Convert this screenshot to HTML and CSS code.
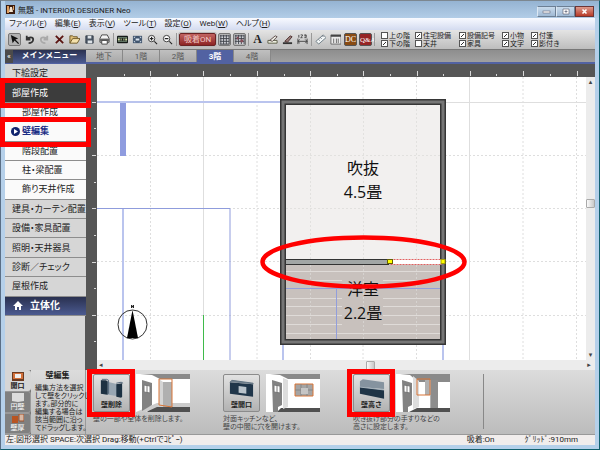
FILE: index.html
```html
<!DOCTYPE html>
<html lang="ja">
<head>
<meta charset="utf-8">
<title>無題 - INTERIOR DESIGNER Neo</title>
<link rel="stylesheet" href="styles.css">
</head>
<body>
<div class="window">
  <header class="titlebar">
    <svg class="app-icon" viewBox="0 0 9 9"><rect width="9" height="9" fill="#3b1d10"/><path d="M1 1h2v7H1zM7 1h1v4H7z" fill="#e0a060"/><path d="M4 2h2l1 5H3z" fill="#f3e3cf"/></svg>
    <h1>無題 - INTERIOR DESIGNER Neo</h1>
    <div class="window-buttons">
      <button type="button" aria-label="最小化"><svg viewBox="0 0 17 9"><rect x="5" y="4" width="7" height="2" fill="#fff" stroke="#667" stroke-width=".6"/></svg></button>
      <button type="button" aria-label="最大化"><svg viewBox="0 0 17 9"><path d="M6 2h6v5H6zM8 4h2v1H8z" fill="#fff" fill-rule="evenodd" stroke="#556" stroke-width=".6"/></svg></button>
      <button type="button" class="close" aria-label="閉じる"><svg viewBox="0 0 17 9"><path d="M6.500 2.500l4 4m0-4l-4 4" stroke="#fff" stroke-width="1.600"/></svg></button>
    </div>
  </header>
  <nav class="menubar">
    <button type="button">ファイル(<u>F</u>)</button>
    <button type="button">編集(<u>E</u>)</button>
    <button type="button">表示(<u>V</u>)</button>
    <button type="button">ツール(<u>T</u>)</button>
    <button type="button">設定(<u>O</u>)</button>
    <button type="button">Web(<u>W</u>)</button>
    <button type="button">ヘルプ(<u>H</u>)</button>
  </nav>
  <div class="toolbar">
    <div class="tools">
      <button type="button" class="pressed" aria-label="選択"><svg viewBox="0 0 12 12"><path d="M2 1l8 4-3 1 4 4-1 1-4-4-2 3z" fill="#111"/></svg></button>
      <button type="button" aria-label="元に戻す"><svg viewBox="0 0 12 12"><path d="M3 2v4h4M3 6c2-3 7-3 7 0 0 2-2 4-5 4" fill="none" stroke="#333" stroke-width="2"/></svg></button>
      <button type="button" aria-label="やり直し"><svg viewBox="0 0 12 12"><path d="M9 2v4H5M9 6C7 3 2 3 2 6c0 2 2 4 5 4" fill="none" stroke="#a9a9a9" stroke-width="2"/></svg></button>
      <button type="button" aria-label="削除"><svg viewBox="0 0 12 12"><path d="M2 2l8 8M10 2l-8 8" stroke="#5b1512" stroke-width="2"/></svg></button>
      <button type="button" aria-label="開く"><svg viewBox="0 0 12 12"><path d="M1 10V2h3l1 1h4v2" fill="#e0c078" stroke="#6b5524"/><path d="M1 10l3-5h8l-3 5z" fill="#f5e2ac" stroke="#6b5524"/></svg></button>
      <button type="button" aria-label="保存"><svg viewBox="0 0 12 12"><path d="M2 2h8v8H2z" fill="#4a5563" stroke="#39424d"/><path d="M4 2h4v3H4zM4 7h5v3H4z" fill="#dde3e8"/></svg></button>
      <button type="button" aria-label="印刷"><svg viewBox="0 0 12 12"><path d="M3 1h6l2 4v4H1V5z" fill="#f4f4f4" stroke="#444"/><path d="M1 5h10v3H1z" fill="#666"/><path d="M3 7h6v4H3z" fill="#fff" stroke="#444"/></svg></button>
      <i class="sep"></i>
      <button type="button" aria-label="部品検索"><svg viewBox="0 0 12 12"><rect x="0" y="2" width="12" height="8" rx="1" fill="#151a18"/><path d="M1 4h10M1 8h10" stroke="#78907c"/><path d="M1 6h2m1 0h1m2 0h1m1 0h2" stroke="#d5e5a8" stroke-width="2"/></svg></button>
      <button type="button" aria-label="全体表示"><svg viewBox="0 0 12 12"><rect x="1" y="2" width="10" height="8" fill="#41556e"/><path d="M2 3h2L2 5zM10 3H8l2 2zM2 9h2L2 7zM10 9H8l2-2zM4 5h4v2H4z" fill="#dbe6f2"/></svg></button>
      <button type="button" aria-label="拡大"><svg viewBox="0 0 12 12"><circle cx="5" cy="5" r="3.500" fill="#fff" stroke="#333"/><path d="M3 5h4M5 3v4M8 8l3 3" stroke="#222" stroke-width="1.200"/></svg></button>
      <button type="button" aria-label="縮小"><svg viewBox="0 0 12 12"><circle cx="5" cy="5" r="3.500" fill="#fff" stroke="#333"/><path d="M3 5h4M8 8l3 3" stroke="#222" stroke-width="1.200"/></svg></button>
      <i class="sep"></i>
      <button type="button" class="snap">吸着ON</button>
      <button type="button" class="pressed" aria-label="グリッド"><svg viewBox="0 0 12 12"><path d="M1 1h10v10H1z" fill="#d3d5da"/><path d="M1 2h10M1 5h10M1 8h10M1 11h10M2 1v10M5 1v10M8 1v10M11 1v10" stroke="#3d4148"/></svg></button>
      <button type="button" class="pressed" aria-label="グリッド吸着"><svg viewBox="0 0 12 12"><path d="M1 1h10v10H1z" fill="#d3d5da"/><path d="M1 2h10M1 5h10M1 8h10M2 1v10M5 1v10M8 1v10M11 1v10" stroke="#3d4148"/><path d="M3 3h2v3H3zM7 6h3v3H7z" fill="#874d58"/></svg></button>
      <i class="sep"></i>
      <button type="button" class="letter" aria-label="文字">A</button>
      <button type="button" aria-label="塗り"><svg viewBox="0 0 12 12"><path d="M1 7h10v3H1z" fill="#eef0e2" stroke="#5a5a44"/><path d="M3 7l6-5 2 1-5 5z" fill="#f3f3ea" stroke="#544"/></svg></button>
      <button type="button" aria-label="線"><svg viewBox="0 0 12 12"><path d="M1 10h10" stroke="#333" stroke-width="2"/><path d="M3 8l6-6 2 1-5 6z" fill="#9a7d7a" stroke="#4d3030"/></svg></button>
      <button type="button" aria-label="寸法"><svg viewBox="0 0 12 12"><path d="M1 5v6M11 5v6M1 8h10M3 6L1 8l2 2M9 6l2 2-2 2" fill="none" stroke="#444"/><path d="M2 1v3M4 1h2v1L4 4h2M8 1h2v3H8m0-2h2" fill="none" stroke="#444"/></svg></button>
      <i class="sep"></i>
      <button type="button" aria-label="測定"><svg viewBox="0 0 12 12"><path d="M1 8l8-7 3 3-8 7z" fill="#f2f6f7" stroke="#6b7b83"/><path d="M4 6l1 1m1-3l1 1m1-3l1 1" stroke="#445"/></svg></button>
      <button type="button" aria-label="一覧"><svg viewBox="0 0 12 12"><path d="M1 1h11v10H1z" fill="#ececec" stroke="#666"/><path d="M1 2h11" stroke="#444" stroke-width="2"/><path d="M4 5v5M7 5v5M9 5v5" stroke="#666"/></svg></button>
      <button type="button" class="badge dc">DC</button>
      <button type="button" class="badge qa">Q&amp;A</button>
      <i class="sep"></i>
    </div>
    <fieldset class="layers" aria-label="表示レイヤー">
      <label><input type="checkbox">上の階</label>
      <label><input type="checkbox" checked>住宅設備</label>
      <label><input type="checkbox" checked>設備記号</label>
      <label><input type="checkbox" checked>小物</label>
      <label><input type="checkbox" checked>付箋</label>
      <label><input type="checkbox" checked>下の階</label>
      <label><input type="checkbox">天井</label>
      <label><input type="checkbox" checked>家具</label>
      <label><input type="checkbox" checked>文字</label>
      <label><input type="checkbox" checked>影付き</label>
    </fieldset>
  </div>
  <div class="tabbar">
    <button type="button" class="collapse" aria-label="メニューを閉じる">«</button>
    <h2>メインメニュー</h2>
    <div class="floors">
      <button type="button">地下</button>
      <button type="button">1階</button>
      <button type="button">2階</button>
      <button type="button" class="current">3階</button>
      <button type="button">4階</button>
    </div>
  </div>
  <div class="middle">
    <nav class="sidebar">
      <ul>
        <li><a href="#">下絵設定</a></li>
        <li class="open marked"><a href="#">部屋作成</a></li>
        <li class="sub"><a href="#">部屋作成</a></li>
        <li class="sub active marked"><a href="#"><svg viewBox="0 0 9 9"><circle cx="4.500" cy="4.500" r="4.500" fill="#10246e"/><path d="M3 2l4 2.500L3 7z" fill="#fff"/></svg>壁編集</a></li>
        <li class="sub"><a href="#">階段配置</a></li>
        <li class="sub"><a href="#">柱・梁配置</a></li>
        <li class="sub"><a href="#">飾り天井作成</a></li>
        <li><a href="#">建具・カーテン配置</a></li>
        <li><a href="#">設備・家具配置</a></li>
        <li><a href="#">照明・天井器具</a></li>
        <li><a href="#">診断／チェック</a></li>
        <li><a href="#">屋根作成</a></li>
        <li class="solid"><a href="#"><svg viewBox="0 0 10 9"><path d="M0 5l5-5 5 5H8v4H6V6H4v3H2V5z" fill="#fff"/></svg>立体化</a></li>
      </ul>
    </nav>
    <div class="workspace">
      <svg class="ruler-top"><path d="M53 7v5M106 7v5M160 7v5M213 7v5M266 7v5M320 7v5M373 7v5M426 7v5M480 7v5" transform="translate(12.500 0)"/><path d="M27 10v2M80 10v2M133 10v2M187 10v2M240 10v2M293 10v2M346 10v2M399 10v2M453 10v2" transform="translate(12.500 0)"/></svg>
      <svg class="ruler-left"><path d="M7 25.500h4M7 78.500h4M7 131.500h4M7 185.500h4M7 238.500h4"/><path d="M9 51.500h2M9 105.500h2M9 158.500h2M9 211.500h2M9 264.500h2"/></svg>
      <svg class="plan" role="img" aria-label="3階平面図">
        <g transform="translate(-97 -77)">
          <g class="grid">
            <path d="M97 102.500h489M203.500 77v283M469.500 77v283"/>
            <path class="dots" d="M97 155.500h489M97 208.500h489M97 261.500h489M97 315.500h489M150.500 77v283M257 77v283M310.500 77v283M363 77v283M416.500 77v283M523 77v283M576.500 77v283"/>
          </g>
          <rect x="120" y="102" width="6" height="54" fill="#8f9cdf"/>
          <path d="M97 102h184M123 209v151M283 345v15M443 345v15" stroke="#bac4ee" stroke-width="2"/>
          <path d="M97 208.500h133v152" fill="none" stroke="#8f9cdc"/>
          <path d="M203.500 315v45" stroke="#3fba4a"/>
          <circle cx="132.500" cy="324.500" r="14.500" fill="none" stroke="#333"/>
          <path d="M132.500 310l5.500 28h-11z"/>
          <path d="M131.500 308v-3l2 3v-3" fill="none" stroke="#222"/>
          <rect x="283" y="102" width="160" height="240" fill="#f2f0ef"/>
          <path class="inner-grid" d="M310.500 105v155M363.500 105v155M416.500 105v155M286 155.500h154M286 208.500h154"/>
          <rect x="286" y="264" width="154" height="75" fill="#c8c1bd"/>
          <path class="boards" d="M286 271.500h154M286 280.500h56M383 280.500h57M286 298.500h56M383 298.500h57M286 306.500h56M383 306.500h57M286 315.500h56M383 315.500h57M286 324.500h56M383 324.500h57M286 333.500h154"/>
          <path class="inner-grid" d="M310.500 265v74M363.500 265v74M416.500 265v74"/>
          <path d="M286 288.500h154M336.500 288v51" stroke="#929edb" fill="none"/>
          <rect x="283" y="102" width="160" height="240" fill="none" stroke="#363636" stroke-width="6"/>
          <rect x="283" y="102" width="160" height="240" fill="none" stroke="#767676" stroke-width="3"/>
          <rect x="285.500" y="259.500" width="103" height="5" fill="#a2a6a5" stroke="#333"/>
          <rect x="390.500" y="259.500" width="51" height="5" fill="#fff" stroke="#e06060" stroke-dasharray="2 1"/>
          <rect x="387.500" y="259.500" width="5" height="4" fill="#ff0" stroke="#666000"/>
          <rect x="441" y="259.500" width="4" height="4" fill="#ff0" stroke="#a8a000"/>
          <g class="room">
            <text x="363" y="174">吹抜</text>
            <text x="363" y="198">4.5畳</text>
            <text x="363" y="295">洋室</text>
            <text x="363" y="319">2.2畳</text>
          </g>
          <ellipse cx="363.500" cy="262" rx="101" ry="24.500" fill="none" stroke="#f00" stroke-width="4.500"/>
        </g>
      </svg>
      <div class="scroll vertical"><i class="arrow">▴</i><i class="thumb"></i><i class="arrow">▾</i></div>
      <div class="scroll horizontal"><i class="arrow">◂</i><i class="thumb"></i><i class="arrow">▸</i></div>
    </div>
  </div>
  <section class="panel">
    <div class="modes">
      <button type="button" class="current"><svg viewBox="0 0 12 9"><path d="M0 0h12v9H0z" fill="#6b3a20"/><path d="M1 1h10v6H1z" fill="#d2703a"/><path d="M3 2h6v4H3z" fill="#eee"/></svg>開口</button>
      <button type="button"><svg viewBox="0 0 12 9"><path d="M0 0h12v8l-6 1-6-1z" fill="#dcdcdc"/></svg>円壁</button>
      <button type="button"><svg viewBox="0 0 12 9"><path d="M0 2h6v7H0z" fill="#b85422"/><path d="M7 0h5v7H7z" fill="#d8b8a4" stroke="#a0502a"/></svg>壁厚</button>
    </div>
    <div class="help">
      <h3>壁編集</h3>
      <p>編集方法を選択<br>して壁をクリックし<br>ます。部分的に<br>編集する場合は<br>該当範囲に沿っ<br>てドラッグします。</p>
    </div>
    <div class="actions">
      <article class="action marked">
        <button type="button"><svg viewBox="0 0 28 22"><path d="M3 2l22 5v12L3 16z" fill="#98a6b2"/><path d="M3 2h5l2 1v14l-7-1zM19 6l6-1v14l-1 1-5-1z" fill="#1d3142"/><path d="M4 1h5l2 1v14M19 5l5-1 2 1" fill="none" stroke="#52667a"/></svg>壁削除</button>
        <svg class="scene" viewBox="0 0 54 38"><rect width="54" height="38" fill="#fff"/><path d="M4 0h50v5H24l-8-4z" fill="#8a8a8a"/><path d="M15 33h39v5H11z" fill="#505050"/><path d="M0 38l21-9h33v4H21L10 38z" fill="#ccc"/><path d="M6 6l10 3v22L6 37z" fill="#828282"/><path d="M8 11l6 1v7l-6-1zM11 11v8" fill="#fff" stroke="#777"/><path d="M23 5l4 3v25l-4-1z" fill="#d5d5d5"/><path d="M27 8h9v25h-9z" fill="#b0b0b0"/><path d="M23 5h13v28l-13-2z" fill="none" stroke="#d87536"/></svg>
        <p>壁の一部や全体を削除します。</p>
      </article>
      <article class="action">
        <button type="button"><svg viewBox="0 0 28 22"><path d="M2 4l24 2v13L2 16z" fill="#20364a"/><path d="M2 4l2-2 22 3v1" fill="#73818e" stroke="#5e707f"/><path d="M11 8l8 1v7l-8-1z" fill="#b9c3cb"/></svg>壁開口</button>
        <svg class="scene" viewBox="0 0 54 38"><rect width="54" height="38" fill="#fff"/><path d="M4 0h50v5H22l-8-4z" fill="#8a8a8a"/><path d="M15 34h39v4H11z" fill="#505050"/><path d="M17 4l5 2v27l-5 2z" fill="#ddd"/><path d="M6 6l10 3v22l-4 2v5H7z" fill="#828282"/><path d="M8 11l6 1v7l-6-1zM11 11v8" fill="#fff" stroke="#777"/><path d="M29 10h18v12H29z" fill="#a4a4a4" stroke="#d87536"/><path d="M35 10v12M41 10v12M29 16h18" stroke="#868686"/><path d="M35 14h7v6h-7z" fill="#c5c5c5"/></svg>
        <p>対面キッチンなど、<br>壁の中間に穴を開けます。</p>
      </article>
      <article class="action marked">
        <button type="button"><svg viewBox="0 0 28 22"><path d="M2 3l3-2 22 3v7L2 9z" fill="#85939f"/><path d="M2 9l25 3v9L2 16z" fill="#1f3446"/><path d="M2 9l25 3" stroke="#a7b4bd"/></svg>壁高さ</button>
        <svg class="scene" viewBox="0 0 54 38"><rect width="54" height="38" fill="#fff"/><path d="M4 0h50v8H22l-8-7z" fill="#8a8a8a"/><path d="M21 34h33v4H13z" fill="#505050"/><path d="M17 2l6 5v26l-6 2z" fill="#ddd"/><path d="M6 6l10 3v22l-4 2v5H7z" fill="#828282"/><path d="M8 11l6 1v7l-6-1zM11 11v8" fill="#fff" stroke="#777"/><path d="M29 6h7v28h-2V21h-5z" fill="#b0b0b0"/><path d="M35 6h7v28h-7z" fill="#8d8d8d"/><path d="M21 5h13v16H21z" fill="none" stroke="#d87536"/></svg>
        <p>吹き抜け部分の手すりなどの<br>高さに設定します。</p>
      </article>
    </div>
  </section>
  <footer class="status">
    <span class="hint">左:図形選択 SPACE:次選択 Drag:移動(+Ctrlでｺﾋﾟｰ)</span>
    <span class="snap-state">吸着:On</span>
    <span class="grid-size">ｸﾞﾘｯﾄﾞ:910mm</span>
  </footer>
</div>
</body>
</html>
```
FILE: styles.css
```css
*, *::before, *::after { box-sizing: border-box; }
html, body { height: 100%; }
body {
  margin: 0;
  overflow: hidden;
  font-family: Roboto, "Noto Sans CJK JP", sans-serif;
  font-size: 8px;
  line-height: 10px;
  color: #222;
}
h1, h2, h3, p, ul, fieldset { margin: 0; padding: 0; border: 0; font-weight: normal; font-size: inherit; }
ul { list-style: none; }
button { margin: 0; padding: 0; border: 0; background: none; font: inherit; color: inherit; }
a { color: inherit; text-decoration: none; }
svg { display: block; }
i { font-style: normal; }

.window {
  display: flex;
  flex-direction: column;
  height: 100vh;
  padding: 0 4px 4px;
  border: 1px solid #12606e;
  border-left-color: #5b6f86;
  border-top-color: #7c8790;
  background: #b5d0ea;
}

/* title and menus */
.titlebar {
  display: flex;
  align-items: center;
  height: 17px;
  padding-left: 1px;
  margin-right: -4px;
  background: linear-gradient(#95b3d2, #b2cde7);
}
.app-icon { width: 9px; height: 9px; margin-right: 3px; }
.titlebar h1 { flex: 1; margin-top: 2px; white-space: nowrap; }
.window-buttons { display: flex; align-self: flex-start; margin: 5px 5px 0 0; }
.window-buttons button {
  width: 19px;
  height: 11px;
  border: 1px solid #6c7f94;
  border-left-color: #dce8f4;
  background: linear-gradient(#c9dbec, #9fb9d4);
}
.window-buttons .close { background: linear-gradient(#dd9a8c, #b83a28); border-color: #6d3535; }
.window-buttons svg { width: 17px; height: 9px; }

.menubar {
  display: flex;
  align-items: center;
  gap: 8px;
  height: 12px;
  padding-left: 4px;
  background: linear-gradient(#f8faff, #d4dcf0);
  font-feature-settings: "palt";
}
.menubar button { white-space: nowrap; }

/* tools */
.toolbar {
  display: flex;
  align-items: center;
  height: 19px;
  background: linear-gradient(#e4e4e4, #bdbdbd);
}
.tools { display: flex; align-items: center; gap: 2px; padding-left: 3px; }
.tools button { flex: none; width: 13px; height: 13px; border-radius: 2px; }
.tools button svg { width: 11px; height: 11px; margin: 1px; }
.tools .pressed { border: 1px solid #777; background: #b4b4b4; }
.tools .pressed svg { margin: 0; }
.sep { flex: none; width: 1px; height: 13px; background: #999; }
.tools .snap {
  width: 37px;
  border: 1px solid #6a2323;
  background: linear-gradient(#c26461, #8d2424);
  color: #f1c9c5;
  line-height: 11px;
  box-shadow: 0 0 0 1px #bbb;
}
.tools .letter { font: bold 12px/13px "Liberation Serif", serif; }
.tools .badge { border: 1px solid #555; color: #fff; font: 8px/10px "Liberation Serif", serif; }
.tools .dc { background: #8a4b12; }
.tools .qa { background: #962525; font-size: 7px; }

.layers {
  display: grid;
  grid-template-columns: 34px 44px 43px 29px 30px;
  grid-auto-rows: 8px;
  margin-left: auto;
  margin-right: 34px;
  font-size: 7px;
  line-height: 8px;
}
.layers label { display: flex; align-items: center; gap: 1px; white-space: nowrap; }
.layers input {
  flex: none;
  appearance: none;
  width: 7px;
  height: 7px;
  margin: 0;
  border: 1px solid #555;
  background: #fff;
}
.layers input:checked { background: #fff linear-gradient(135deg, transparent 40%, #333 40%, #333 60%, transparent 60%) center / 3px 3px no-repeat; }

/* menu heading and floor tabs */
.tabbar {
  display: flex;
  height: 15px;
  border-top: 1px solid #777;
  border-bottom: 2px solid #5262a2;
  background: linear-gradient(#8e8e8e, #a0a0a0);
}
.collapse { width: 8px; background: #4b4b4b; color: #fff; line-height: 11px; margin-bottom: -1px; }
.tabbar h2 {
  width: 73px;
  margin-bottom: -1px;
  background: linear-gradient(#2a3150, #4b5a90);
  color: #fff;
  font-weight: 700;
  line-height: 12px;
  text-align: center;
}
.floors { display: flex; }
.floors button {
  width: 37px;
  border-right: 1px solid #888;
  background: linear-gradient(#c0c0c0, #a9a9a9);
  color: #555;
  line-height: 11px;
}
.floors .current { background: #5262a2; color: #fff; font-weight: 700; }

/* left menu */
.middle { display: flex; flex: 1; min-height: 0; }
.sidebar { flex: none; width: 80px; background: #d6d6d6; }
.sidebar ul { display: grid; grid-template-rows: repeat(13, 1fr); height: 252px; }
.sidebar li { position: relative; border-bottom: 1px solid #8d8d8d; background: #d6d6d6; }
.sidebar a {
  display: flex;
  align-items: center;
  height: 100%;
  padding-left: 7px;
  font-size: 9px;
  white-space: nowrap;
  font-feature-settings: "palt";
}
.sidebar .open { background: #3c3c3c; color: #fff; }
.sidebar .sub { background: #fafafa; }
.sidebar .sub a { padding-left: 17px; }
.sidebar .active a { padding-left: 6px; color: #1b2d86; font-weight: 700; }
.sidebar .active svg { width: 9px; height: 9px; margin-right: 2px; }
.sidebar .solid { background: linear-gradient(#2a3150, #4b5a90); color: #fff; }
.sidebar .solid a { padding-left: 8px; font-weight: 700; font-size: 10px; }
.sidebar .solid svg { width: 10px; height: 9px; margin-right: 7px; }
.sidebar .marked { z-index: 2; }
.sidebar .marked::after {
  content: "";
  position: absolute;
  inset: -5px -5px -6px;
  border: 5px solid #f00;
}

/* drawing area */
.workspace {
  flex: 1;
  display: grid;
  grid-template-columns: 12px 1fr 9px;
  grid-template-rows: 13px 1fr 10px;
  background: #565656;
}
.ruler-top { grid-area: 1 / 1 / 2 / 4; width: 100%; height: 13px; }
.ruler-left { grid-area: 2 / 1 / 4 / 2; width: 12px; height: 100%; }
.ruler-top path, .ruler-left path { stroke: #d8d8d8; }
.plan { grid-area: 2 / 2; width: 100%; height: 100%; background: #fff; }
.grid path { stroke: #dedede; fill: none; }
.grid .dots { stroke-dasharray: 2 2; }
.inner-grid { stroke: #dcdad8; stroke-opacity: .7; stroke-dasharray: 2 2; }
.boards { stroke: #dfdbd8; }
.room text { font-family: "Open Sans", "Noto Sans CJK JP", sans-serif; font-size: 16px; text-anchor: middle; fill: #111; }
.scroll { display: flex; align-items: center; background: #ececec; }
.vertical { grid-area: 2 / 3; flex-direction: column; padding: 1px 0; }
.horizontal { grid-area: 3 / 2 / 4 / 4; padding: 0 2px; }
.arrow { width: 8px; height: 8px; font: 7px/8px "DejaVu Sans", sans-serif; text-align: center; color: #444; }
.thumb { width: 9px; height: 9px; border: 1px solid #aaa; border-radius: 1px; background: linear-gradient(90deg, #fafafa, #c9c9c9); }
.vertical .arrow:first-child { flex: 0 0 43%; }
.vertical .arrow:last-child { margin-top: auto; }
.horizontal .arrow:first-child { flex: 0 0 54%; text-align: left; }
.horizontal .arrow:last-child { margin-left: auto; }

/* editing commands */
.panel {
  flex: none;
  display: flex;
  height: 65px;
  border-bottom: 1px solid #999;
  background: linear-gradient(#dcdcdc, #bcbcbc);
  font-size: 7px;
  line-height: 8px;
}
.modes { flex: none; display: flex; flex-direction: column; width: 26px; background: #777; }
.modes button {
  flex: 1;
  display: flex;
  flex-direction: column;
  align-items: center;
  justify-content: center;
  gap: 1px;
  border: 1px solid #999;
  border-left: 0;
  border-radius: 0 3px 3px 0;
  background: #808080;
  color: #fff;
}
.modes button svg { width: 12px; height: 9px; }
.modes .current { border-color: transparent; background: #d6d6d6; color: #222; font-weight: 700; }
.help { flex: none; width: 55px; padding: 2px 0 0 4px; border-right: 1px solid #999; font-feature-settings: "palt"; white-space: nowrap; }
.help h3 { margin-bottom: 4px; padding-right: 5px; font-size: 8px; font-weight: 700; text-align: center; }
.actions { display: grid; grid-template-columns: repeat(3, 130px); margin: 4px 0 5px 7px; border-right: 1px solid #888; }
.action { position: relative; display: grid; grid-template-columns: 37px 54px; grid-template-rows: 38px auto; column-gap: 6px; align-content: start; }
.action button {
  display: flex;
  flex-direction: column;
  align-items: center;
  gap: 1px;
  padding-top: 3px;
  border: 1px solid #8b8b8b;
  border-radius: 2px;
  background: linear-gradient(#e2e2e2, #b2b2b2);
  font-weight: 700;
}
.action button svg { width: 27px; height: 22px; }
.scene { width: 54px; height: 38px; }
.action p { grid-column: 1 / -1; padding-top: 3px; white-space: nowrap; font-feature-settings: "palt"; color: #444; }
.action.marked::after {
  content: "";
  position: absolute;
  top: -5px;
  left: -6px;
  width: 48px;
  height: 48px;
  border: 5px solid #f00;
}

/* status line */
.status { flex: none; display: flex; align-items: center; height: 10px; padding: 0 17px 0 1px; background: #f1edec; white-space: nowrap; font-feature-settings: "palt"; }
.hint { flex: 1; }
.snap-state { margin-right: 30px; }
```
